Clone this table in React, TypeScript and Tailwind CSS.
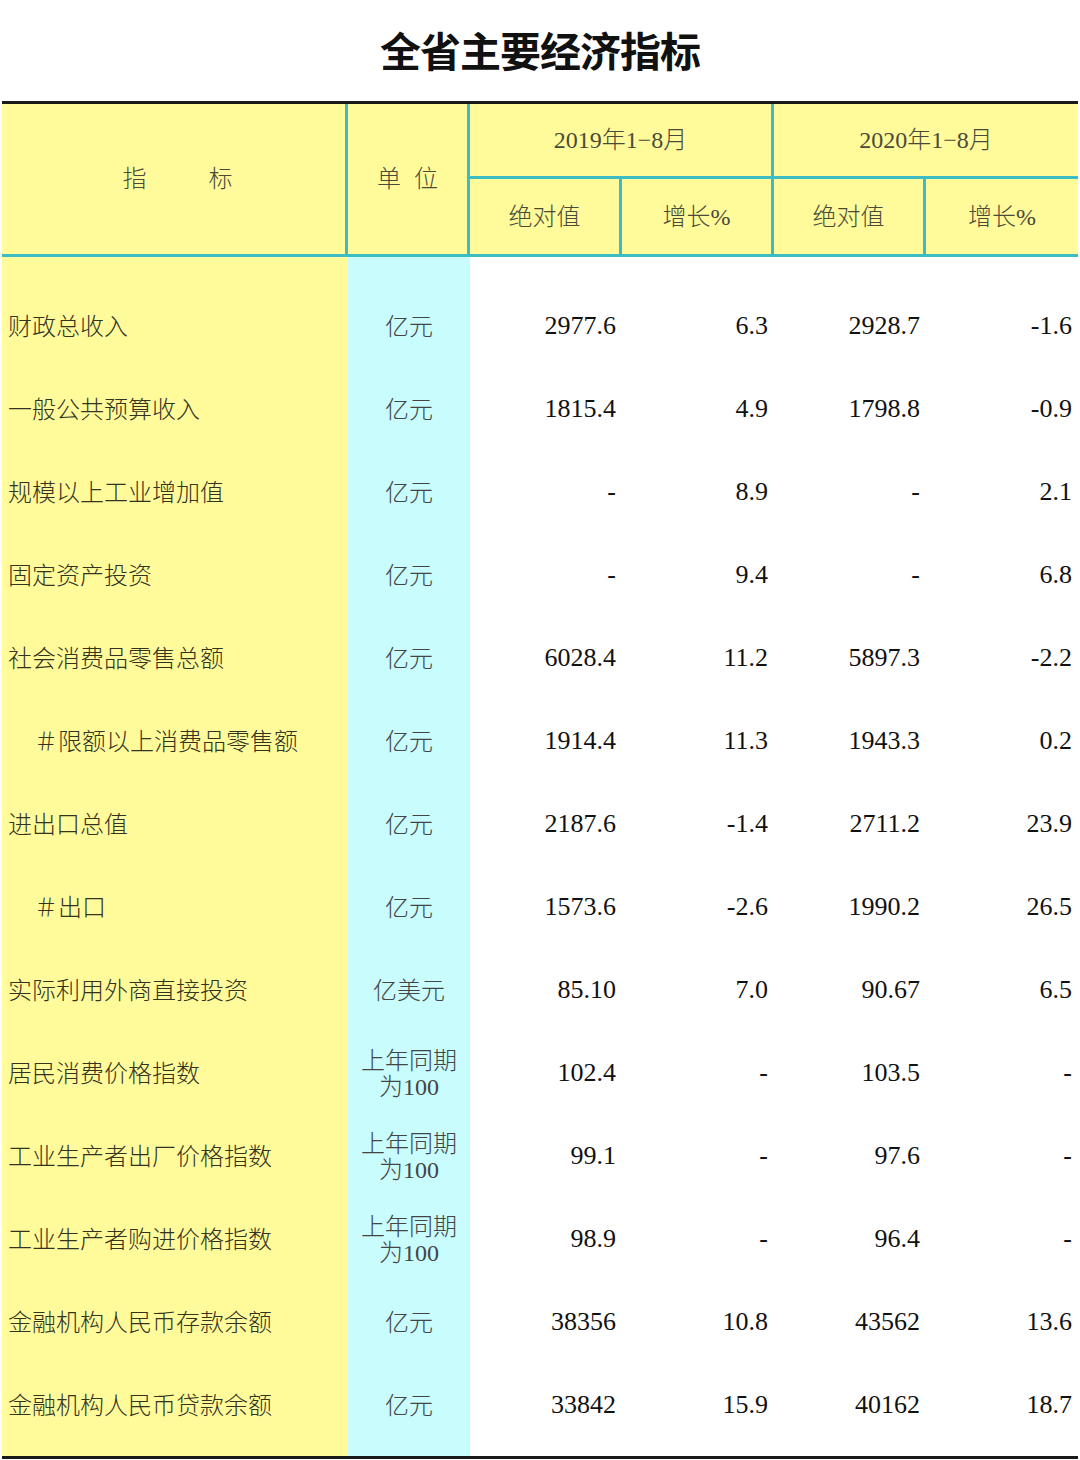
import React from 'react';

type Row = {
  name: string;
  indent?: boolean;
  unit: string | string[];
  v: [string, string, string, string];
};

const rows: Row[] = [
  { name: '财政总收入', unit: '亿元', v: ['2977.6', '6.3', '2928.7', '-1.6'] },
  { name: '一般公共预算收入', unit: '亿元', v: ['1815.4', '4.9', '1798.8', '-0.9'] },
  { name: '规模以上工业增加值', unit: '亿元', v: ['-', '8.9', '-', '2.1'] },
  { name: '固定资产投资', unit: '亿元', v: ['-', '9.4', '-', '6.8'] },
  { name: '社会消费品零售总额', unit: '亿元', v: ['6028.4', '11.2', '5897.3', '-2.2'] },
  { name: '＃限额以上消费品零售额', indent: true, unit: '亿元', v: ['1914.4', '11.3', '1943.3', '0.2'] },
  { name: '进出口总值', unit: '亿元', v: ['2187.6', '-1.4', '2711.2', '23.9'] },
  { name: '＃出口', indent: true, unit: '亿元', v: ['1573.6', '-2.6', '1990.2', '26.5'] },
  { name: '实际利用外商直接投资', unit: '亿美元', v: ['85.10', '7.0', '90.67', '6.5'] },
  { name: '居民消费价格指数', unit: ['上年同期', '为100'], v: ['102.4', '-', '103.5', '-'] },
  { name: '工业生产者出厂价格指数', unit: ['上年同期', '为100'], v: ['99.1', '-', '97.6', '-'] },
  { name: '工业生产者购进价格指数', unit: ['上年同期', '为100'], v: ['98.9', '-', '96.4', '-'] },
  { name: '金融机构人民币存款余额', unit: '亿元', v: ['38356', '10.8', '43562', '13.6'] },
  { name: '金融机构人民币贷款余额', unit: '亿元', v: ['33842', '15.9', '40162', '18.7'] },
];

const font = { fontFamily: '"Liberation Serif", "Noto Sans CJK SC", serif' };

function YearGroup({ label, last }: { label: string; last?: boolean }) {
  return (
    <div className={`flex w-[304px] flex-col ${last ? '' : 'border-r-[3px] border-[#3cbcc4]'}`}>
      <div className="flex h-[75px] items-center justify-center border-b-[3px] border-[#3cbcc4] text-[24px] font-light text-[#4a4a3a]">
        {label}
      </div>
      <div className="flex flex-1 text-[24px] font-light text-[#4a4a3a]">
        <div className="flex w-[152px] items-center justify-center border-r-[3px] border-[#3cbcc4]">绝对值</div>
        <div className="flex flex-1 items-center justify-center">增长%</div>
      </div>
    </div>
  );
}

function Spacer({ h }: { h: string }) {
  return (
    <div className={`flex ${h}`}>
      <div className="w-[346px] bg-[#fffb9b]" />
      <div className="w-[122px] bg-[#c8fcfd]" />
      <div className="flex-1 bg-white" />
    </div>
  );
}

export default function App() {
  return (
    <div className="w-[1080px] bg-white" style={font}>
      <h1
        className="flex h-[101px] items-center justify-center pb-[2px] text-[41px] font-bold tracking-[-1px] text-[#111]"
        style={{ fontFamily: '"Noto Sans CJK SC", sans-serif' }}
      >
        全省主要经济指标
      </h1>

      <div className="mx-[2px] w-[1076px] border-y-[3px] border-[#1a1a1a]">
        {/* Header */}
        <div className="flex h-[153px] border-b-[3px] border-[#3cbcc4] bg-[#fffb9b]">
          <div className="flex w-[346px] items-center justify-center gap-[62px] border-r-[3px] border-[#3cbcc4] pl-[8px] text-[24px] font-light text-[#4a4a3a]">
            <span>指</span>
            <span>标</span>
          </div>
          <div className="flex w-[122px] items-center justify-center gap-[13px] border-r-[3px] border-[#3cbcc4] text-[24px] font-light text-[#4a4a3a]">
            <span>单</span>
            <span>位</span>
          </div>
          <YearGroup label="2019年1−8月" />
          <YearGroup label="2020年1−8月" last />
        </div>

        {/* Body */}
        <Spacer h="h-[28px]" />
        {rows.map((r) => (
          <div key={r.name} className="flex h-[83px]">
            <div
              className={`flex w-[346px] items-center bg-[#fffb9b] text-[24px] font-light text-[#33331f] ${
                r.indent ? 'pl-[32px]' : 'pl-[6px]'
              }`}
            >
              {r.name}
            </div>
            <div className="flex w-[122px] flex-col items-center justify-center bg-[#c8fcfd] text-[24px] font-light leading-[26px] text-[#444]">
              {Array.isArray(r.unit) ? r.unit.map((u) => <span key={u}>{u}</span>) : <span>{r.unit}</span>}
            </div>
            {r.v.map((x, i) => (
              <div
                key={i}
                className="flex w-[152px] items-center justify-end bg-white pr-[6px] pb-[3px] text-[26px] text-[#111]"
              >
                {x}
              </div>
            ))}
          </div>
        ))}
        <Spacer h="h-[9px]" />
      </div>
    </div>
  );
}
